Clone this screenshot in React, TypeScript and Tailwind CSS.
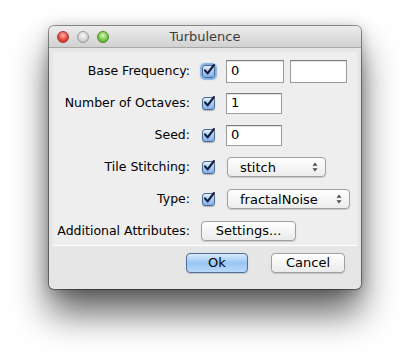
import React from 'react';

const font = { fontFamily: '"DejaVu Sans", "Open Sans", sans-serif' };

function CheckBox({ focused = false }: { focused?: boolean }) {
  return (
    <div
      className={`w-[13px] h-[13px] flex-shrink-0 rounded-[3px] border border-[#4b6a93] bg-gradient-to-b from-[#e4effb] via-[#a9cdf2] to-[#7fb1e8] flex items-center justify-center ${
        focused ? 'shadow-[0_0_1px_2px_rgba(95,155,225,0.75)]' : 'shadow-[0_1px_1px_rgba(0,0,0,0.25)]'
      }`}
    >
      <svg width="12" height="12" viewBox="0 0 12 12" className="-mt-[2px] ml-[1px] overflow-visible">
        <path d="M2 6.4 L4.6 9.4 L11 1" fill="none" stroke="#151a3a" strokeWidth="2.1" strokeLinecap="round" strokeLinejoin="round" />
      </svg>
    </div>
  );
}

function Field({ value, w, h }: { value: string; w: string; h: string }) {
  return (
    <div className={`${w} ${h} bg-white border border-[#9c9c9c] border-t-[#7d7d7d] shadow-[inset_0_1px_1px_rgba(0,0,0,0.12)] flex items-center pl-[4px] text-[13px] text-black`}>
      {value}
    </div>
  );
}

function Popup({ label, w }: { label: string; w: string }) {
  return (
    <div className={`${w} h-[20px] rounded-[4px] border border-[#a0a0a0] bg-gradient-to-b from-white to-[#ececec] shadow-[0_1px_1px_rgba(0,0,0,0.15)] flex items-center pl-[12px] pr-[7px] text-[13px] text-black`}>
      <span className="flex-1 leading-none">{label}</span>
      <svg width="6" height="10" viewBox="0 0 6 10">
        <path d="M3 0.5 L5.5 3.8 L0.5 3.8 Z" fill="#4a4a4a" />
        <path d="M3 9.5 L5.5 6.2 L0.5 6.2 Z" fill="#4a4a4a" />
      </svg>
    </div>
  );
}

function Button({ label, w, primary = false }: { label: string; w: string; primary?: boolean }) {
  return (
    <div
      className={`${w} h-[20px] rounded-[4px] border flex items-center justify-center text-[13px] text-black shadow-[0_1px_1px_rgba(0,0,0,0.15)] ${
        primary
          ? 'border-[#4f6e9c] bg-gradient-to-b from-[#d9eafc] via-[#9ac6f3] to-[#b7d8f9]'
          : 'border-[#9f9f9f] bg-gradient-to-b from-white to-[#ebebeb]'
      }`}
    >
      {label}
    </div>
  );
}

export default function App() {
  const labels = [
    'Base Frequency:',
    'Number of Octaves:',
    'Seed:',
    'Tile Stitching:',
    'Type:',
    'Additional Attributes:',
  ];

  return (
    <div className="w-[410px] h-[360px] bg-white pt-[26px] pl-[49px] overflow-hidden" style={font}>
      <div className="w-[312px] h-[263px] rounded-[5px] bg-[#e6e6e6] shadow-[0_0_0_1px_rgba(0,0,0,0.4),0_24px_36px_rgba(0,0,0,0.62),0_2px_14px_rgba(0,0,0,0.25)] flex flex-col overflow-hidden">
        {/* title bar */}
        <div className="h-[22px] flex items-center bg-gradient-to-b from-[#ececec] to-[#d2d2d2] border-b border-[#a8a8a8]">
          <div className="w-[60px] pl-[8px] flex items-center gap-[8px]">
            <div className="w-[12px] h-[12px] rounded-full border border-[#a33a33] bg-[radial-gradient(circle_at_50%_35%,#ffb0a8,#e2423a_60%,#b8261f)]" />
            <div className="w-[12px] h-[12px] rounded-full border border-[#9a9a9a] bg-[radial-gradient(circle_at_50%_35%,#fafafa,#d0d0d0_60%,#b5b5b5)]" />
            <div className="w-[12px] h-[12px] rounded-full border border-[#4d8a2c] bg-[radial-gradient(circle_at_50%_35%,#d8f7b6,#70c541_60%,#4a9b25)]" />
          </div>
          <div className="flex-1 text-center text-[13px] text-[#3c3c3c]">Turbulence</div>
          <div className="w-[60px]" />
        </div>

        {/* content panel */}
        <div className="mx-[4px] mt-[4px] h-[194px] bg-[#eeeeee] border-b border-white pt-[6px]">
          <div className="grid grid-cols-[137px_1fr] gap-x-[12px] gap-y-[6px] text-[12.5px] text-black">
            {labels.map((l, i) => (
              <React.Fragment key={i}>
                <div className="h-[26px] flex items-center justify-end whitespace-nowrap">{l}</div>
                <div className="h-[26px] flex items-center">
                  {i === 0 && (
                    <>
                      <CheckBox focused />
                      <div className="ml-[11px] flex gap-[6px]">
                        <Field value="0" w="w-[58px]" h="h-[23px]" />
                        <Field value="" w="w-[57px]" h="h-[23px]" />
                      </div>
                    </>
                  )}
                  {i === 1 && (
                    <>
                      <CheckBox />
                      <div className="ml-[11px]">
                        <Field value="1" w="w-[56px]" h="h-[21px]" />
                      </div>
                    </>
                  )}
                  {i === 2 && (
                    <>
                      <CheckBox />
                      <div className="ml-[11px]">
                        <Field value="0" w="w-[56px]" h="h-[21px]" />
                      </div>
                    </>
                  )}
                  {i === 3 && (
                    <>
                      <CheckBox />
                      <div className="ml-[12px]">
                        <Popup label="stitch" w="w-[99px]" />
                      </div>
                    </>
                  )}
                  {i === 4 && (
                    <>
                      <CheckBox />
                      <div className="ml-[12px]">
                        <Popup label="fractalNoise" w="w-[123px]" />
                      </div>
                    </>
                  )}
                  {i === 5 && (
                    <div className="-ml-[1px]">
                      <Button label="Settings..." w="w-[95px]" />
                    </div>
                  )}
                </div>
              </React.Fragment>
            ))}
          </div>
        </div>

        {/* footer buttons */}
        <div className="flex justify-end gap-[23px] pr-[16px] pt-[7px]">
          <Button label="Ok" w="w-[62px]" primary />
          <Button label="Cancel" w="w-[74px]" />
        </div>
      </div>
    </div>
  );
}
